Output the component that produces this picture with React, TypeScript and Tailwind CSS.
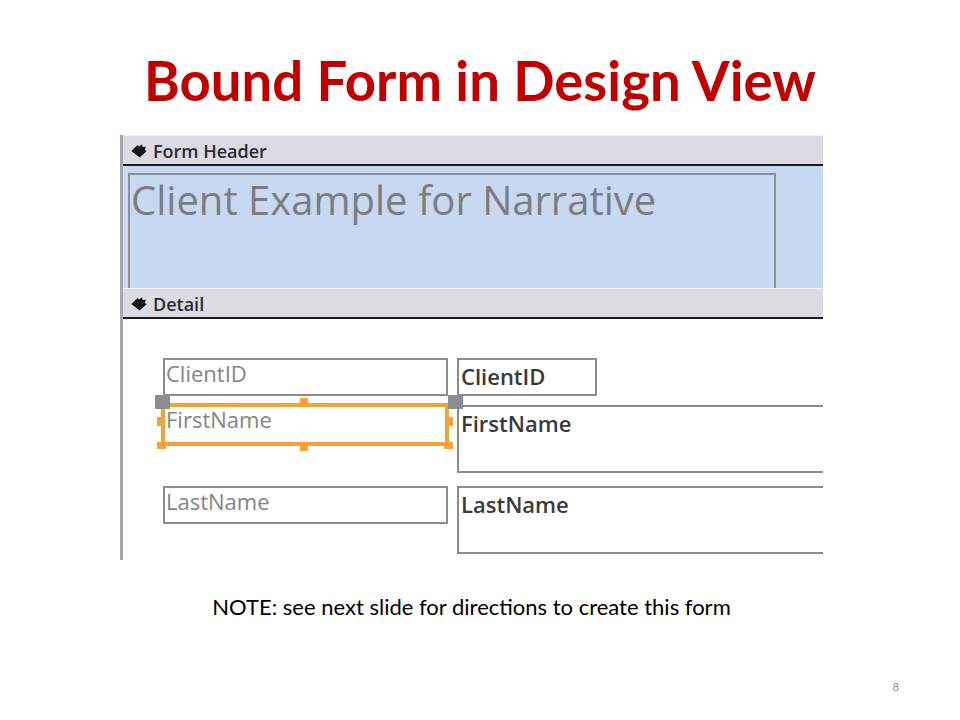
const calibri = { fontFamily: "Lato, 'Open Sans', sans-serif" };
const formFont = { fontFamily: "'Open Sans', 'Noto Sans', sans-serif" };

function SectionIcon() {
  return (
    <svg width="16" height="14" viewBox="0 0 15 13" className="shrink-0">
      <path d="M0.3 6.6 L6.2 0.8 L7.6 2.3 L10.4 0.2 L10.8 2.8 L14 2.4 L12.9 5.4 L14.6 6.8 L8.2 12.6 Z" fill="#161616" />
    </svg>
  );
}

function SectionBar({ title }: { title: string }) {
  return (
    <div className="flex flex-col">
      <div className="h-px bg-[#f4f4f6]" />
      <div className="flex h-[28px] items-center gap-[6px] bg-[#dcdbe3] pl-[8px] pt-[2px]">
        <SectionIcon />
        <span className="text-[18px] font-semibold leading-[24px] text-[#2a2a35]" style={formFont}>
          {title}
        </span>
      </div>
      <div className="h-[2px] bg-[#1c1c1c]" />
    </div>
  );
}

function Label({ text }: { text: string }) {
  return (
    <div className="h-[38px] w-[285px] shrink-0 border-2 border-[#8c8c8c] pl-[1px] text-[22px] leading-[26px] text-[#858585]">
      {text}
    </div>
  );
}

function TextBox({ text, className }: { text: string; className: string }) {
  return (
    <div className={`shrink-0 border-2 border-[#8c8c8c] pl-[2px] text-[22px] font-semibold leading-[32px] text-[#3a3a3a] ${className}`}>
      {text}
    </div>
  );
}

function SelectedLabel({ text }: { text: string }) {
  return (
    <div className="relative -ml-[2px] h-[43px] w-[288px] shrink-0 border-[4px] border-[#f7a234] pl-[1px] text-[22px] leading-[24px] text-[#858585]">
      {text}
      {/* move handles */}
      <span className="absolute -left-[10px] -top-[12px] h-[14px] w-[15px] bg-[#8a8d91]" />
      <span className="absolute left-[283px] -top-[12px] h-[14px] w-[15px] bg-[#8a8d91]" />
      {/* sizing handles */}
      <span className="absolute left-[135px] -top-[9px] h-[6px] w-[8px] bg-[#f7a234]" />
      <span className="absolute left-[135px] -bottom-[9px] h-[6px] w-[8px] bg-[#f7a234]" />
      <span className="absolute -left-[8px] top-[10px] h-[9px] w-[6px] bg-[#f7a234]" />
      <span className="absolute -right-[8px] top-[10px] h-[9px] w-[6px] bg-[#f7a234]" />
      <span className="absolute -left-[8px] -bottom-[7px] h-[7px] w-[9px] bg-[#f7a234]" />
      <span className="absolute -right-[8px] -bottom-[7px] h-[7px] w-[9px] bg-[#f7a234]" />
    </div>
  );
}

export default function App() {
  return (
    <div className="flex h-[720px] w-[960px] flex-col bg-white">
      <h1
        className="mt-[49px] h-[62px] text-center text-[54.5px] font-bold leading-[62px] text-[#c00000]"
        style={calibri}
      >
        Bound Form in Design View
      </h1>

      {/* design view capture */}
      <div className="ml-[120px] mt-[24px] flex h-[425px] w-[703px] shrink-0 flex-col border-l-[3px] border-[#a7a7ab]">
        <SectionBar title="Form Header" />
        <div className="h-[122px] bg-[#c6d9f0] pl-[5px] pt-[7px]">
          <div className="h-full w-[648px] border-x-2 border-t-2 border-[#8b919b] pl-[1px]">
            <div className="text-[40px] leading-[50px] text-[#7b7d80]" style={formFont}>
              Client Example for Narrative
            </div>
          </div>
        </div>
        <SectionBar title="Detail" />

        <div className="flex flex-1 flex-col overflow-hidden bg-white pl-[40px] pt-[39px]" style={formFont}>
          <div className="flex gap-[9px]">
            <Label text="ClientID" />
            <TextBox text="ClientID" className="h-[38px] w-[140px]" />
          </div>
          <div className="mt-[7px] flex items-start gap-[8px]">
            <SelectedLabel text="FirstName" />
            <TextBox text="FirstName" className="mt-[2px] h-[68px] w-[420px]" />
          </div>
          <div className="mt-[13px] flex gap-[9px]">
            <Label text="LastName" />
            <TextBox text="LastName" className="h-[68px] w-[420px]" />
          </div>
        </div>
      </div>

      <p className="mt-[33px] pr-[17px] text-center text-[22px] leading-[28px] text-black" style={calibri}>
        NOTE: see next slide for directions to create this form
      </p>

      <div className="mt-auto flex justify-end pb-[25px] pr-[61px]">
        <span className="text-[11px] leading-[16px] text-[#8c8c8c]" style={calibri}>
          8
        </span>
      </div>
    </div>
  );
}
